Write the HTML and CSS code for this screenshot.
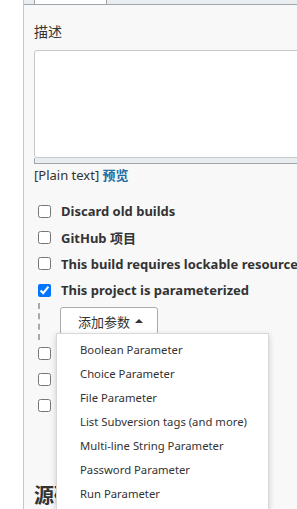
FILE: index.html
```html
<!DOCTYPE html>
<html lang="zh">
  <head>
    <meta charset="UTF-8" />
    <title>配置</title>
    <link rel="stylesheet" href="styles.css">
  </head>
  <body>
    <div class="page">
      <div class="gutter"></div>
      <div class="panel">
        <div class="tabs">
          <div class="tab-pad"></div>
          <div class="tab active"></div>
        </div>

        <div class="content">
          <div class="field-label">描述</div>
          <div class="editor"></div>
          <div class="editor-bar"></div>
          <div class="preview">[Plain text] <a href="#">预览</a></div>

          <div class="options">
            <label class="option"><input type="checkbox" /> Discard old builds</label>
            <label class="option"><input type="checkbox" /> GitHub 项目</label>
            <label class="option"><input type="checkbox" /> This build requires lockable resources</label>
            <label class="option"><input type="checkbox" checked /> This project is parameterized</label>

            <div class="nested">
              <div class="add-wrap">
                <button class="add-btn">添加参数 <span class="caret"></span></button>
                <ul class="menu">
                  <li>Boolean Parameter</li>
                  <li>Choice Parameter</li>
                  <li>File Parameter</li>
                  <li>List Subversion tags (and more)</li>
                  <li>Multi-line String Parameter</li>
                  <li>Password Parameter</li>
                  <li>Run Parameter</li>
                </ul>
              </div>
            </div>

            <label class="option"><input type="checkbox" /> Throttle builds</label>
            <label class="option"><input type="checkbox" /> 在必要的时候并发构建</label>
            <label class="option"><input type="checkbox" /> 关闭构建</label>
          </div>

          <h2 class="section">源码管理</h2>
        </div>
      </div>
    </div>
  </body>
</html>
```

FILE: styles.css
```css
* {
  margin: 0;
  padding: 0;
  box-sizing: border-box;
}

body {
  font-family: "Noto Sans", "Noto Sans CJK SC", sans-serif;
  color: #333;
  background: #fff;
  overflow: hidden;
}

.page {
  display: flex;
  height: 509px;
}

.gutter {
  width: 23px;
  flex-shrink: 0;
  background: #fff;
}

.panel {
  flex: 1;
  background: #f8f8f8;
  border-left: 1px solid #c4c7ca;
  overflow: hidden;
}

.tabs {
  display: flex;
  height: 5px;
  background: #e9edf0;
  border-bottom: 1px solid #9ea5ab;
}

.tab-pad {
  width: 10px;
}

.tab.active {
  width: 73px;
  background: #fff;
  border-left: 1px solid #9ea5ab;
  border-right: 1px solid #9ea5ab;
}

.content {
  padding-left: 10px;
}

.field-label {
  margin-top: 17px;
  font-size: 14px;
  line-height: 20px;
}

.editor {
  margin-top: 8px;
  width: 300px;
  height: 108px;
  background: #fff;
  border: 1px solid #c8c8c8;
  border-radius: 3px;
}

.editor-bar {
  width: 300px;
  height: 6px;
  background: #e9edf0;
  border-left: 1px solid #9ea5ab;
  border-bottom: 1px solid #9ea5ab;
}

.preview {
  margin-top: 2px;
  font-size: 13px;
  line-height: 18px;
}

.preview a {
  color: #1c6ea4;
  font-weight: bold;
  text-decoration: none;
}

.options {
  margin-top: 14px;
}

.option {
  display: flex;
  align-items: center;
  gap: 10px;
  height: 26.3px;
  font-size: 13px;
  font-weight: bold;
  color: #333;
  white-space: nowrap;
}

.option input {
  width: 13px;
  height: 13px;
  margin: 0 0 0 4px;
  flex-shrink: 0;
}

.nested {
  margin-left: 4px;
  padding: 4px 0 5px 20px;
  border-left: 2px dashed #aaa;
}

.add-wrap {
  position: relative;
}

.add-btn {
  display: flex;
  align-items: center;
  gap: 5px;
  height: 28px;
  padding: 0 14px 0 17px;
  font-family: inherit;
  font-size: 13px;
  color: #333;
  background: #fff;
  border: 1px solid #a9acaf;
  border-radius: 3px;
}

.caret {
  width: 0;
  height: 0;
  border-left: 4px solid transparent;
  border-right: 4px solid transparent;
  border-bottom: 4px solid #333;
}

.menu {
  position: absolute;
  top: 26px;
  left: -4px;
  width: 213px;
  padding: 4px 0;
  list-style: none;
  background: #fff;
  border: 1px solid #d9d9d9;
  box-shadow: 0 2px 6px rgba(0, 0, 0, 0.18);
  z-index: 5;
}

.menu li {
  height: 23.9px;
  line-height: 23.9px;
  padding-left: 23px;
  font-size: 11.3px;
  color: #333;
  white-space: nowrap;
}

.section {
  margin-top: 64px;
  padding-bottom: 3px;
  font-size: 20px;
  line-height: 26px;
  font-weight: bold;
  border-bottom: 1px solid #c8c8c8;
}
```
